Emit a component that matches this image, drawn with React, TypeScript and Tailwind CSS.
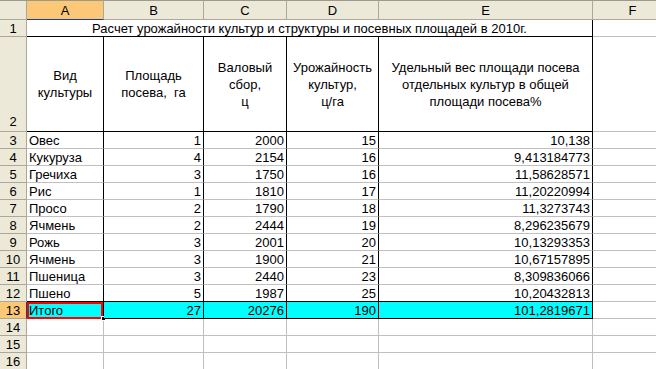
import clsx from 'clsx'

const rows: [string, string, string, string, string][] = [
  ['Овес', '1', '2000', '15', '10,138'],
  ['Кукуруза', '4', '2154', '16', '9,413184773'],
  ['Гречиха', '3', '1750', '16', '11,58628571'],
  ['Рис', '1', '1810', '17', '11,20220994'],
  ['Просо', '2', '1790', '18', '11,3273743'],
  ['Ячмень', '2', '2444', '19', '8,296235679'],
  ['Рожь', '3', '2001', '20', '10,13293353'],
  ['Ячмень', '3', '1900', '21', '10,67157895'],
  ['Пшеница', '3', '2440', '23', '8,309836066'],
  ['Пшено', '5', '1987', '25', '10,20432813'],
]

const total: [string, string, string, string, string] = ['Итого', '27', '20276', '190', '101,2819671']

const cols = ['A', 'B', 'C', 'D', 'E', 'F']

function RowHead({ n, active, bottom }: { n: number; active?: boolean; bottom?: boolean }) {
  return (
    <div
      className={clsx(
        'flex justify-center border-b border-r',
        bottom ? 'items-end pb-[1px]' : 'items-center',
        active ? 'bg-[#fbc878] border-b-[#aca899] border-r-[#1c3c8c]' : 'bg-[#ece9d8] border-[#aca899]'
      )}
    >
      {n}
    </div>
  )
}

// one data row of the table, A..F
function DataRow({ n, cells, last }: { n: number; cells: string[]; last?: boolean }) {
  const bottom = n === 12 || last ? 'border-b-black' : 'border-b-[#c0c0c0]'
  return (
    <>
      <RowHead n={n} active={last} />
      {cells.map((c, i) => (
        <div
          key={i}
          className={clsx(
            'relative flex items-center border-b border-r border-r-black whitespace-nowrap overflow-visible',
            bottom,
            last && 'bg-[#00ffff]',
            i === 0 ? 'justify-start pl-[2px]' : 'justify-end pr-[2px]'
          )}
        >
          {c}
          {last && i === 0 && (
            <>
              <div className="absolute inset-x-0 top-0 bottom-[-1px] border-2 border-[#ff0000]" />
              <div className="absolute right-[-3px] bottom-[-3px] w-[5px] h-[5px] bg-black border border-white" />
            </>
          )}
        </div>
      ))}
      <div className="border-b border-r border-[#c0c0c0]" />
    </>
  )
}

export default function App() {
  return (
    <div className="w-[656px] h-[369px] overflow-hidden bg-white text-black font-['Liberation_Sans',Arial,sans-serif] text-[13px] leading-[17px]">
      <div className="grid grid-cols-[27px_77px_100px_83px_92px_214px_80px] grid-rows-[20px_17px_95px_repeat(14,17px)]">
        {/* column headers */}
        <div className="bg-[#ece9d8] border-t border-t-[#9d9a8c] border-b border-r border-[#aca899]" />
        {cols.map((c, i) => (
          <div
            key={c}
            className={clsx(
              'flex items-center justify-center border-t border-t-[#9d9a8c] border-b border-r pt-[1px]',
              i === 0 ? 'bg-[#fbc878] border-b-[#1c3c8c] border-r-[#aca899]' : 'bg-[#ece9d8] border-b-[#aca899] border-r-[#aca899]'
            )}
          >
            {c}
          </div>
        ))}

        {/* row 1 title */}
        <RowHead n={1} />
        <div className="col-span-5 flex items-center justify-center border-b border-r border-black whitespace-nowrap">
          Расчет урожайности культур и структуры и посевных площадей в 2010г.
        </div>
        <div className="border-b border-r border-[#c0c0c0]" />

        {/* row 2 headings */}
        <RowHead n={2} bottom />
        <div className="flex items-center justify-center text-center border-b border-r border-black">
          Вид<br />культуры
        </div>
        <div className="flex items-center justify-center text-center border-b border-r border-black whitespace-pre">
          {'Площадь\nпосева,  га'}
        </div>
        <div className="flex items-center justify-center text-center border-b border-r border-black">
          Валовый<br />сбор,<br />ц
        </div>
        <div className="flex items-center justify-center text-center border-b border-r border-black">
          Урожайность<br />культур,<br />ц/га
        </div>
        <div className="flex items-center justify-center text-center border-b border-r border-black">
          Удельный вес площади посева<br />отдельных культур в общей<br />площади посева%
        </div>
        <div className="border-b border-r border-[#c0c0c0]" />

        {rows.map((r, i) => (
          <DataRow key={i} n={i + 3} cells={r} />
        ))}
        <DataRow n={13} cells={total} last />

        {[14, 15, 16].map((n) => (
          <div key={n} className="contents">
            <RowHead n={n} />
            {cols.map((c) => (
              <div key={c} className="border-b border-r border-[#c0c0c0]" />
            ))}
          </div>
        ))}
      </div>
    </div>
  )
}
